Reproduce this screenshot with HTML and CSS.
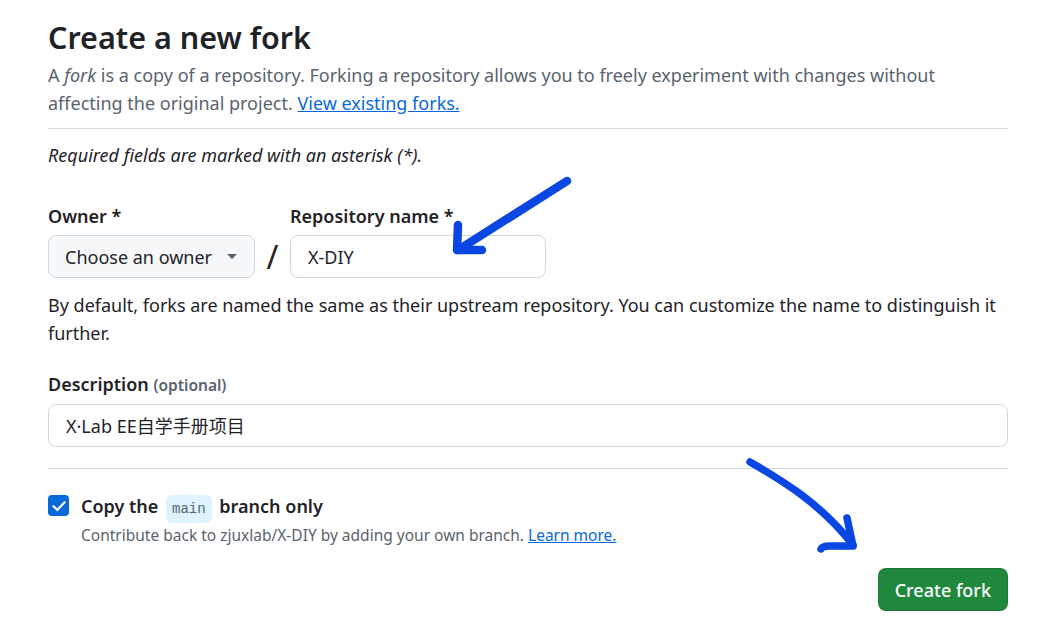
FILE: index.html
```html
<!DOCTYPE html>
<html lang="en">
<head>
<meta charset="utf-8">
<title>Create a new fork</title>
<link rel="stylesheet" href="styles.css">
</head>
<body>
<main class="page">
  <h1 class="title">Create a new fork</h1>
  <p class="lead">A <em>fork</em> is a copy of a repository. Forking a repository allows you to freely experiment with changes without affecting the original project. <a href="#" class="link">View existing forks.</a></p>
  <hr class="divider divider-top">
  <p class="required"><em>Required fields are marked with an asterisk (*).</em></p>

  <div class="name-row">
    <div class="field owner-field">
      <label class="label">Owner *</label>
      <button class="select" type="button"><span>Choose an owner</span><span class="caret"></span></button>
    </div>
    <span class="slash">/</span>
    <div class="field repo-field">
      <label class="label">Repository name *</label>
      <div class="input repo-input">X-DIY</div>
    </div>
  </div>
  <p class="help">By default, forks are named the same as their upstream repository. You can customize the name to distinguish it further.</p>

  <div class="field desc-field">
    <label class="label">Description <span class="optional">(optional)</span></label>
    <div class="input desc-input">X·Lab EE自学手册项目</div>
  </div>

  <hr class="divider divider-bottom">

  <div class="check-row">
    <span class="checkbox">
      <svg viewBox="0 0 20 20" width="20" height="20"><path d="M4.5 10.2 L8.3 14 L15.6 6.2" fill="none" stroke="#fff" stroke-width="2.2" stroke-linecap="round" stroke-linejoin="round"/></svg>
    </span>
    <div class="check-text">
      <div class="check-label">Copy the <code class="branch">main</code> branch only</div>
      <div class="check-note">Contribute back to zjuxlab/X-DIY by adding your own branch. <a href="#" class="link">Learn more.</a></div>
    </div>
  </div>

  <div class="actions">
    <button class="btn-primary" type="button">Create fork</button>
  </div>

  <svg class="annot" width="1050" height="632" viewBox="0 0 1050 632">
    <g fill="none" stroke="#0a47e2" stroke-linecap="round" stroke-linejoin="round">
      <path d="M567 181 L458 250" stroke-width="8.5"/>
      <path d="M458 225 L457 250 L482 250" stroke-width="8.5"/>
      <path d="M750 462 C785 482 822 505 853 545" stroke-width="7.5"/>
      <path d="M847 518 L853 546 L830 546 Q822 546 821 549" stroke-width="7.5"/>
    </g>
  </svg>
</main>
</body>
</html>
```

FILE: styles.css
```css
* { box-sizing: border-box; }

html, body {
  margin: 0;
  padding: 0;
  background: #ffffff;
}

body {
  font-family: "Noto Sans", "Noto Sans CJK SC", sans-serif;
  font-size: 18px;
  line-height: 28px;
  color: #1f2328;
}

.page {
  position: relative;
  width: 1050px;
  height: 632px;
  padding: 17px 42px 0 48px;
  overflow: hidden;
}

.title {
  margin: 0;
  font-size: 30.5px;
  line-height: 40px;
  font-weight: 600;
  color: #1f2328;
}

.lead {
  margin: 4px 0 0;
  color: #59636e;
}

.link {
  color: #0969da;
  text-decoration: underline;
}

.divider {
  border: 0;
  border-top: 1px solid #d1d9e0;
  margin: 0;
  height: 0;
}

.divider-top { margin-top: 11px; }

.required {
  margin: 12px 0 0;
  color: #1f2328;
}

.name-row {
  display: flex;
  align-items: flex-end;
  margin-top: 33px;
}

.field {
  display: flex;
  flex-direction: column;
}

.label {
  font-weight: 600;
  line-height: 28px;
  margin-bottom: 5px;
}

.select {
  display: flex;
  align-items: center;
  justify-content: space-between;
  width: 207px;
  height: 43px;
  padding: 0 17px 0 16px;
  background: #f6f8fa;
  border: 1px solid #d1d9e0;
  border-radius: 8px;
  font: inherit;
  color: #1f2328;
}

.caret {
  width: 0;
  height: 0;
  border-left: 5px solid transparent;
  border-right: 5px solid transparent;
  border-top: 5px solid #59636e;
}

.slash {
  width: 35px;
  height: 43px;
  display: flex;
  align-items: center;
  justify-content: center;
  font-size: 32px;
  line-height: 43px;
  color: #1f2328;
}

.input {
  height: 43px;
  display: flex;
  align-items: center;
  padding: 0 17px;
  border: 1px solid #d1d9e0;
  border-radius: 8px;
  background: #ffffff;
  color: #1f2328;
}

.repo-input { width: 256px; }

.help {
  margin: 13px 0 0;
  color: #1f2328;
}

.desc-field { margin-top: 23px; }

.optional {
  font-size: 15.5px;
  color: #59636e;
}

.desc-input { width: 100%; }

.divider-bottom { margin-top: 21px; }

.check-row {
  display: flex;
  align-items: flex-start;
  gap: 12px;
  margin-top: 23px;
}

.checkbox {
  flex: none;
  width: 21px;
  height: 21px;
  margin-top: 3px;
  background: #0969da;
  border-radius: 4px;
  display: flex;
  align-items: center;
  justify-content: center;
}

.check-label {
  font-weight: 600;
  line-height: 28px;
}

.branch {
  font-family: "Liberation Mono", "DejaVu Sans Mono", monospace;
  font-size: 14px;
  font-weight: 400;
  line-height: 18px;
  padding: 6px 6px;
  margin: 0 3px;
  background: #ddf4ff;
  color: #59636e;
  border-radius: 6px;
}

.check-note {
  font-size: 15.5px;
  line-height: 24px;
  margin-top: 3px;
  color: #59636e;
}

.actions {
  display: flex;
  justify-content: flex-end;
  margin-top: 21px;
}

.btn-primary {
  height: 43px;
  padding: 0 16px;
  background: #1f883d;
  color: #ffffff;
  border: 1px solid rgba(31, 35, 40, 0.15);
  border-radius: 8px;
  font: inherit;
  font-weight: 500;
}

.annot {
  position: absolute;
  left: 0;
  top: 0;
  pointer-events: none;
}
```
